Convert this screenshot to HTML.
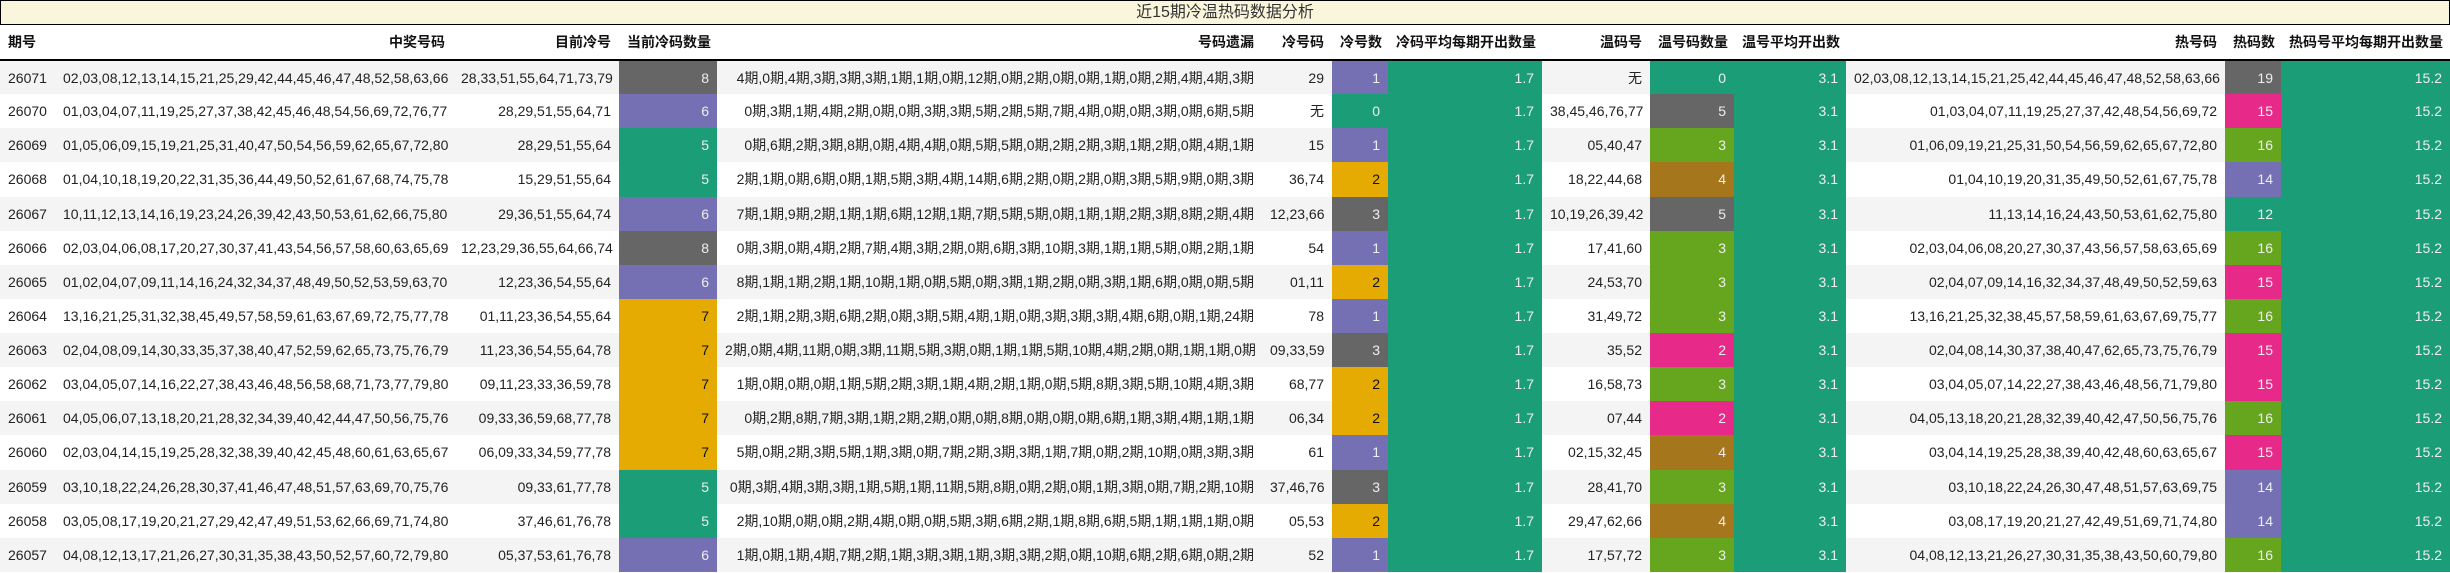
<!DOCTYPE html>
<html><head><meta charset="utf-8">
<style>
html,body{margin:0;padding:0;background:#fff;width:2450px;height:573px;overflow:hidden}
body{font-family:"Liberation Sans","Noto Sans CJK SC",sans-serif;font-size:14px;color:#222}
.title{line-height:23px;background:#faf6dc;border:1px solid #000;text-align:center;font-size:16px;color:#333;box-sizing:border-box;height:25px}
table{border-collapse:collapse;table-layout:fixed;width:2450px}
th{height:34px;font-weight:bold;text-align:right;padding:0 8px;border-bottom:2px solid #000;white-space:nowrap;color:#111}
th.l,td.l{text-align:left}
td{height:34.13px;padding:0 8px;text-align:right;white-space:nowrap;overflow:hidden;box-sizing:border-box}
tbody tr:nth-child(odd){background:#f4f4f4}
tbody tr:nth-child(even){background:#fff}
.g{background:#666;color:#eee}.p{background:#7570b3;color:#eee}.n{background:#1b9e77;color:#eee}
.o{background:#e6ab02;color:#111}.k{background:#e7298a;color:#eee}.v{background:#66a61e;color:#eee}.b{background:#a6761d;color:#eee}
</style></head><body>
<div class="title">近15期冷温热码数据分析</div>
<table>
<colgroup><col style="width:55px"><col style="width:398px"><col style="width:166px"><col style="width:98px"><col style="width:545px"><col style="width:70px"><col style="width:56px"><col style="width:154px"><col style="width:108px"><col style="width:84px"><col style="width:112px"><col style="width:379px"><col style="width:56px"><col style="width:169px"></colgroup>
<thead><tr><th class="l">期号</th><th>中奖号码</th><th>目前冷号</th><th>当前冷码数量</th><th>号码遗漏</th><th>冷号码</th><th>冷号数</th><th>冷码平均每期开出数量</th><th>温码号</th><th>温号码数量</th><th>温号平均开出数</th><th>热号码</th><th>热码数</th><th>热码号平均每期开出数量</th></tr></thead>
<tbody>
<tr><td class="l">26071</td><td>02,03,08,12,13,14,15,21,25,29,42,44,45,46,47,48,52,58,63,66</td><td>28,33,51,55,64,71,73,79</td><td class="g">8</td><td>4期,0期,4期,3期,3期,3期,1期,1期,0期,12期,0期,2期,0期,0期,1期,0期,2期,4期,4期,3期</td><td>29</td><td class="p">1</td><td class="n">1.7</td><td>无</td><td class="n">0</td><td class="n">3.1</td><td>02,03,08,12,13,14,15,21,25,42,44,45,46,47,48,52,58,63,66</td><td class="g">19</td><td class="n">15.2</td></tr>
<tr><td class="l">26070</td><td>01,03,04,07,11,19,25,27,37,38,42,45,46,48,54,56,69,72,76,77</td><td>28,29,51,55,64,71</td><td class="p">6</td><td>0期,3期,1期,4期,2期,0期,0期,3期,3期,5期,2期,5期,7期,4期,0期,0期,3期,0期,6期,5期</td><td>无</td><td class="n">0</td><td class="n">1.7</td><td>38,45,46,76,77</td><td class="g">5</td><td class="n">3.1</td><td>01,03,04,07,11,19,25,27,37,42,48,54,56,69,72</td><td class="k">15</td><td class="n">15.2</td></tr>
<tr><td class="l">26069</td><td>01,05,06,09,15,19,21,25,31,40,47,50,54,56,59,62,65,67,72,80</td><td>28,29,51,55,64</td><td class="n">5</td><td>0期,6期,2期,3期,8期,0期,4期,4期,0期,5期,5期,0期,2期,2期,3期,1期,2期,0期,4期,1期</td><td>15</td><td class="p">1</td><td class="n">1.7</td><td>05,40,47</td><td class="v">3</td><td class="n">3.1</td><td>01,06,09,19,21,25,31,50,54,56,59,62,65,67,72,80</td><td class="v">16</td><td class="n">15.2</td></tr>
<tr><td class="l">26068</td><td>01,04,10,18,19,20,22,31,35,36,44,49,50,52,61,67,68,74,75,78</td><td>15,29,51,55,64</td><td class="n">5</td><td>2期,1期,0期,6期,0期,1期,5期,3期,4期,14期,6期,2期,0期,2期,0期,3期,5期,9期,0期,3期</td><td>36,74</td><td class="o">2</td><td class="n">1.7</td><td>18,22,44,68</td><td class="b">4</td><td class="n">3.1</td><td>01,04,10,19,20,31,35,49,50,52,61,67,75,78</td><td class="p">14</td><td class="n">15.2</td></tr>
<tr><td class="l">26067</td><td>10,11,12,13,14,16,19,23,24,26,39,42,43,50,53,61,62,66,75,80</td><td>29,36,51,55,64,74</td><td class="p">6</td><td>7期,1期,9期,2期,1期,1期,6期,12期,1期,7期,5期,5期,0期,1期,1期,2期,3期,8期,2期,4期</td><td>12,23,66</td><td class="g">3</td><td class="n">1.7</td><td>10,19,26,39,42</td><td class="g">5</td><td class="n">3.1</td><td>11,13,14,16,24,43,50,53,61,62,75,80</td><td class="n">12</td><td class="n">15.2</td></tr>
<tr><td class="l">26066</td><td>02,03,04,06,08,17,20,27,30,37,41,43,54,56,57,58,60,63,65,69</td><td>12,23,29,36,55,64,66,74</td><td class="g">8</td><td>0期,3期,0期,4期,2期,7期,4期,3期,2期,0期,6期,3期,10期,3期,1期,1期,5期,0期,2期,1期</td><td>54</td><td class="p">1</td><td class="n">1.7</td><td>17,41,60</td><td class="v">3</td><td class="n">3.1</td><td>02,03,04,06,08,20,27,30,37,43,56,57,58,63,65,69</td><td class="v">16</td><td class="n">15.2</td></tr>
<tr><td class="l">26065</td><td>01,02,04,07,09,11,14,16,24,32,34,37,48,49,50,52,53,59,63,70</td><td>12,23,36,54,55,64</td><td class="p">6</td><td>8期,1期,1期,2期,1期,10期,1期,0期,5期,0期,3期,1期,2期,0期,3期,1期,6期,0期,0期,5期</td><td>01,11</td><td class="o">2</td><td class="n">1.7</td><td>24,53,70</td><td class="v">3</td><td class="n">3.1</td><td>02,04,07,09,14,16,32,34,37,48,49,50,52,59,63</td><td class="k">15</td><td class="n">15.2</td></tr>
<tr><td class="l">26064</td><td>13,16,21,25,31,32,38,45,49,57,58,59,61,63,67,69,72,75,77,78</td><td>01,11,23,36,54,55,64</td><td class="o">7</td><td>2期,1期,2期,3期,6期,2期,0期,3期,5期,4期,1期,0期,3期,3期,3期,4期,6期,0期,1期,24期</td><td>78</td><td class="p">1</td><td class="n">1.7</td><td>31,49,72</td><td class="v">3</td><td class="n">3.1</td><td>13,16,21,25,32,38,45,57,58,59,61,63,67,69,75,77</td><td class="v">16</td><td class="n">15.2</td></tr>
<tr><td class="l">26063</td><td>02,04,08,09,14,30,33,35,37,38,40,47,52,59,62,65,73,75,76,79</td><td>11,23,36,54,55,64,78</td><td class="o">7</td><td>2期,0期,4期,11期,0期,3期,11期,5期,3期,0期,1期,1期,5期,10期,4期,2期,0期,1期,1期,0期</td><td>09,33,59</td><td class="g">3</td><td class="n">1.7</td><td>35,52</td><td class="k">2</td><td class="n">3.1</td><td>02,04,08,14,30,37,38,40,47,62,65,73,75,76,79</td><td class="k">15</td><td class="n">15.2</td></tr>
<tr><td class="l">26062</td><td>03,04,05,07,14,16,22,27,38,43,46,48,56,58,68,71,73,77,79,80</td><td>09,11,23,33,36,59,78</td><td class="o">7</td><td>1期,0期,0期,0期,1期,5期,2期,3期,1期,4期,2期,1期,0期,5期,8期,3期,5期,10期,4期,3期</td><td>68,77</td><td class="o">2</td><td class="n">1.7</td><td>16,58,73</td><td class="v">3</td><td class="n">3.1</td><td>03,04,05,07,14,22,27,38,43,46,48,56,71,79,80</td><td class="k">15</td><td class="n">15.2</td></tr>
<tr><td class="l">26061</td><td>04,05,06,07,13,18,20,21,28,32,34,39,40,42,44,47,50,56,75,76</td><td>09,33,36,59,68,77,78</td><td class="o">7</td><td>0期,2期,8期,7期,3期,1期,2期,2期,0期,0期,8期,0期,0期,0期,6期,1期,3期,4期,1期,1期</td><td>06,34</td><td class="o">2</td><td class="n">1.7</td><td>07,44</td><td class="k">2</td><td class="n">3.1</td><td>04,05,13,18,20,21,28,32,39,40,42,47,50,56,75,76</td><td class="v">16</td><td class="n">15.2</td></tr>
<tr><td class="l">26060</td><td>02,03,04,14,15,19,25,28,32,38,39,40,42,45,48,60,61,63,65,67</td><td>06,09,33,34,59,77,78</td><td class="o">7</td><td>5期,0期,2期,3期,5期,1期,3期,0期,7期,2期,3期,3期,1期,7期,0期,2期,10期,0期,3期,3期</td><td>61</td><td class="p">1</td><td class="n">1.7</td><td>02,15,32,45</td><td class="b">4</td><td class="n">3.1</td><td>03,04,14,19,25,28,38,39,40,42,48,60,63,65,67</td><td class="k">15</td><td class="n">15.2</td></tr>
<tr><td class="l">26059</td><td>03,10,18,22,24,26,28,30,37,41,46,47,48,51,57,63,69,70,75,76</td><td>09,33,61,77,78</td><td class="n">5</td><td>0期,3期,4期,3期,3期,1期,5期,1期,11期,5期,8期,0期,2期,0期,1期,3期,0期,7期,2期,10期</td><td>37,46,76</td><td class="g">3</td><td class="n">1.7</td><td>28,41,70</td><td class="v">3</td><td class="n">3.1</td><td>03,10,18,22,24,26,30,47,48,51,57,63,69,75</td><td class="p">14</td><td class="n">15.2</td></tr>
<tr><td class="l">26058</td><td>03,05,08,17,19,20,21,27,29,42,47,49,51,53,62,66,69,71,74,80</td><td>37,46,61,76,78</td><td class="n">5</td><td>2期,10期,0期,0期,2期,4期,0期,0期,5期,3期,6期,2期,1期,8期,6期,5期,1期,1期,1期,0期</td><td>05,53</td><td class="o">2</td><td class="n">1.7</td><td>29,47,62,66</td><td class="b">4</td><td class="n">3.1</td><td>03,08,17,19,20,21,27,42,49,51,69,71,74,80</td><td class="p">14</td><td class="n">15.2</td></tr>
<tr><td class="l">26057</td><td>04,08,12,13,17,21,26,27,30,31,35,38,43,50,52,57,60,72,79,80</td><td>05,37,53,61,76,78</td><td class="p">6</td><td>1期,0期,1期,4期,7期,2期,1期,3期,3期,1期,3期,3期,2期,0期,10期,6期,2期,6期,0期,2期</td><td>52</td><td class="p">1</td><td class="n">1.7</td><td>17,57,72</td><td class="v">3</td><td class="n">3.1</td><td>04,08,12,13,21,26,27,30,31,35,38,43,50,60,79,80</td><td class="v">16</td><td class="n">15.2</td></tr>
</tbody></table>
</body></html>
